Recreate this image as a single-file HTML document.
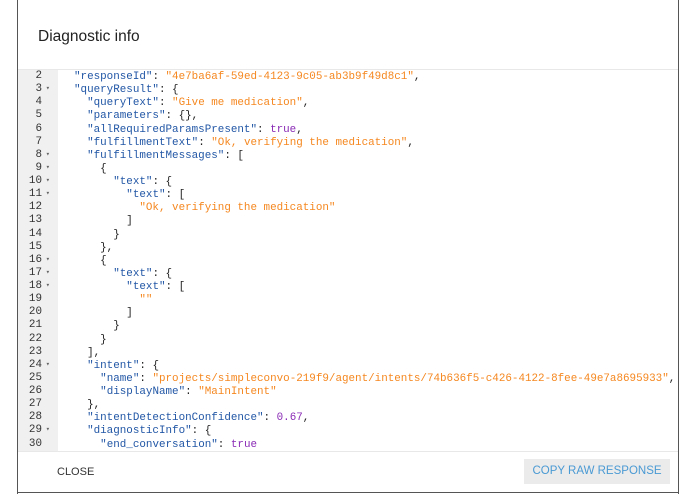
<!DOCTYPE html><html><head><style>
body{margin:0;width:695px;height:494px;background:#fff;position:relative;overflow:hidden;font-family:"Liberation Sans",sans-serif}
.lb{position:absolute;left:17px;top:0;width:1px;height:494px;background:#555}
.rb{position:absolute;left:678px;top:0;width:1px;height:494px;background:#555}
.bb{position:absolute;left:17px;top:492px;width:662px;height:1px;background:#555}
h1{position:absolute;left:38px;top:28px;margin:0;font-size:15.5px;font-weight:normal;color:#222}
.code{position:absolute;left:18px;top:69px;width:660px;height:381px;border-top:1px solid #e8e8e8;border-bottom:1px solid #e8e8e8;overflow:hidden;font-family:"Liberation Mono",monospace;font-size:10.9px;line-height:13.12px}
.in{position:absolute;left:0;top:1px;width:100%;height:100%}
.g{position:absolute;left:0;top:-1px;width:40px;height:calc(100% + 2px);background:#f0f0f0;color:#333}
.g div{text-align:right;padding-right:8px;position:relative}
.g div.f:after{content:"▾";position:absolute;right:0px;font-size:7px;color:#666}
.gi{padding-top:1px}
.c{position:absolute;left:56px;top:0;white-space:pre;color:#222}
.k{color:#2156a5}.s{color:#f5871f}.v{color:#8a2bb5}
.close{position:absolute;left:57px;top:466px;font-size:11px;color:#333}
.btn{position:absolute;left:524px;top:459px;width:146px;height:25px;background:#ebebeb;color:#4a9ad4;font-size:11.5px;line-height:25px;text-align:center}
</style></head><body>
<div class="lb"></div><div class="rb"></div><div class="bb"></div>
<h1>Diagnostic info</h1>
<div class="code">
<div class="g"><div class="gi"><div>2</div><div class="f">3</div><div>4</div><div>5</div><div>6</div><div>7</div><div class="f">8</div><div class="f">9</div><div class="f">10</div><div class="f">11</div><div>12</div><div>13</div><div>14</div><div>15</div><div class="f">16</div><div class="f">17</div><div class="f">18</div><div>19</div><div>20</div><div>21</div><div>22</div><div>23</div><div class="f">24</div><div>25</div><div>26</div><div>27</div><div>28</div><div class="f">29</div><div>30</div></div></div>
<div class="in"><div class="c"><span class="k">"responseId"</span>: <span class="s">"4e7ba6af-59ed-4123-9c05-ab3b9f49d8c1"</span>,
<span class="k">"queryResult"</span>: {
  <span class="k">"queryText"</span>: <span class="s">"Give me medication"</span>,
  <span class="k">"parameters"</span>: {},
  <span class="k">"allRequiredParamsPresent"</span>: <span class="v">true</span>,
  <span class="k">"fulfillmentText"</span>: <span class="s">"Ok, verifying the medication"</span>,
  <span class="k">"fulfillmentMessages"</span>: [
    {
      <span class="k">"text"</span>: {
        <span class="k">"text"</span>: [
          <span class="s">"Ok, verifying the medication"</span>
        ]
      }
    },
    {
      <span class="k">"text"</span>: {
        <span class="k">"text"</span>: [
          <span class="s">""</span>
        ]
      }
    }
  ],
  <span class="k">"intent"</span>: {
    <span class="k">"name"</span>: <span class="s">"projects/simpleconvo-219f9/agent/intents/74b636f5-c426-4122-8fee-49e7a8695933"</span>,
    <span class="k">"displayName"</span>: <span class="s">"MainIntent"</span>
  },
  <span class="k">"intentDetectionConfidence"</span>: <span class="v">0.67</span>,
  <span class="k">"diagnosticInfo"</span>: {
    <span class="k">"end_conversation"</span>: <span class="v">true</span></div></div>
</div>
<div class="close">CLOSE</div>
<div class="btn">COPY RAW RESPONSE</div>
</body></html>
